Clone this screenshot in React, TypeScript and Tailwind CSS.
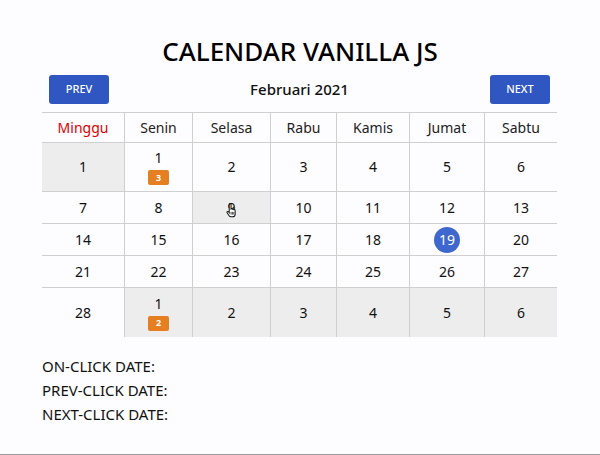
import React from "react";

type Day = {
  n: number;
  gray?: boolean;
  badge?: number;
  today?: boolean;
  hover?: boolean;
};

const days = ["Minggu", "Senin", "Selasa", "Rabu", "Kamis", "Jumat", "Sabtu"];
const widths = ["w-[82px]", "w-[68px]", "w-[78px]", "w-[66px]", "w-[73px]", "w-[75px]", "w-[73px]"];

const weeks: { h: string; cells: Day[] }[] = [
  {
    h: "h-[48px]",
    cells: [
      { n: 1, gray: true },
      { n: 1, badge: 3 },
      { n: 2 },
      { n: 3 },
      { n: 4 },
      { n: 5 },
      { n: 6 },
    ],
  },
  {
    h: "h-[31px]",
    cells: [{ n: 7 }, { n: 8 }, { n: 9, hover: true }, { n: 10 }, { n: 11 }, { n: 12 }, { n: 13 }],
  },
  {
    h: "h-[31px]",
    cells: [{ n: 14 }, { n: 15 }, { n: 16 }, { n: 17 }, { n: 18 }, { n: 19, today: true }, { n: 20 }],
  },
  {
    h: "h-[31px]",
    cells: [{ n: 21 }, { n: 22 }, { n: 23 }, { n: 24 }, { n: 25 }, { n: 26 }, { n: 27 }],
  },
  {
    h: "h-[49px]",
    cells: [
      { n: 28 },
      { n: 1, gray: true, badge: 2 },
      { n: 2, gray: true },
      { n: 3, gray: true },
      { n: 4, gray: true },
      { n: 5, gray: true },
      { n: 6, gray: true },
    ],
  },
];

// little hand cursor sitting over the hovered cell
const HandCursor = () => (
  <svg
    width="11"
    height="15"
    viewBox="0 0 12 16"
    className="absolute left-[33px] top-[11px]"
  >
    <path
      d="M3.5 1.5c0-.6.4-1 1-1s1 .4 1 1v5l.3-.2c.5-.3 1-.1 1.3.3.5-.3 1-.1 1.3.3.5-.3 1.1 0 1.3.5l.3.8V12c0 1.6-1.2 2.8-2.8 2.8H5.5c-.9 0-1.6-.4-2.1-1.1L1.2 10.5c-.3-.5-.2-1 .2-1.3.4-.3 1-.2 1.3.2l.8 1V1.5z"
      fill="#fff"
      stroke="#111"
      strokeWidth="1.1"
    />
    <path d="M5.5 9.5v3M7 9.5v3M8.5 9.5v3" stroke="#111" strokeWidth="0.8" />
  </svg>
);

const Cell: React.FC<{ day: Day; col: number; h: string }> = ({ day, col, h }) => {
  return (
    <div
      className={`${widths[col]} ${h} relative flex flex-col items-center justify-center ${
        col > 0 ? "border-l border-[#cfcfcf]" : ""
      } ${day.gray || day.hover ? "bg-[#ededee]" : ""}`}
    >
      {day.today ? (
        <span className="flex h-[26px] w-[26px] items-center justify-center rounded-full bg-[#3f68cf] text-white">
          {day.n}
        </span>
      ) : (
        <span className="leading-[18px]">{day.n}</span>
      )}
      {day.badge && (
        <span className="mt-[3px] flex h-[15px] w-[21px] items-center justify-center rounded-[2px] bg-[#e67e22] text-[9px] font-bold text-white">
          {day.badge}
        </span>
      )}
      {day.hover && <HandCursor />}
    </div>
  );
};

export default function App() {
  return (
    <div className="flex h-[455px] w-full flex-col border-b border-[#9a9a9a] bg-[#fdfcfe] font-['Noto_Sans',sans-serif] text-[#111]">
      <h1 className="mt-[33px] text-center text-[26px] font-medium leading-[36px] text-black">
        CALENDAR VANILLA JS
      </h1>

      <div className="mx-[42px] mt-[6px] flex w-[515px] items-center justify-between px-[7px]">
        <button className="h-[29px] w-[60px] rounded-[3px] bg-[#2f56c1] text-[11px] font-medium text-white">
          PREV
        </button>
        <span className="text-[15px] font-medium">Februari 2021</span>
        <button className="h-[29px] w-[60px] rounded-[3px] bg-[#2f56c1] text-[11px] font-medium text-white">
          NEXT
        </button>
      </div>

      <div className="mx-[42px] mt-[8px] w-[515px] text-[14px]">
        <div className="flex h-[31px] border-y border-[#cfcfcf]">
          {days.map((d, i) => (
            <div
              key={d}
              className={`${widths[i]} flex items-center justify-center ${
                i > 0 ? "border-l border-[#cfcfcf]" : ""
              } ${i === 0 ? "text-[#e00000]" : "text-[#222]"}`}
            >
              {d}
            </div>
          ))}
        </div>
        {weeks.map((w, r) => (
          <div
            key={r}
            className={`flex ${r < weeks.length - 1 ? "border-b border-[#cfcfcf]" : ""}`}
          >
            {w.cells.map((c, i) => (
              <Cell key={i} day={c} col={i} h={w.h} />
            ))}
          </div>
        ))}
      </div>

      <div className="mx-[42px] mt-[17px] flex flex-col text-[15px] leading-[24px]">
        <span>ON-CLICK DATE:</span>
        <span>PREV-CLICK DATE:</span>
        <span>NEXT-CLICK DATE:</span>
      </div>
    </div>
  );
}
